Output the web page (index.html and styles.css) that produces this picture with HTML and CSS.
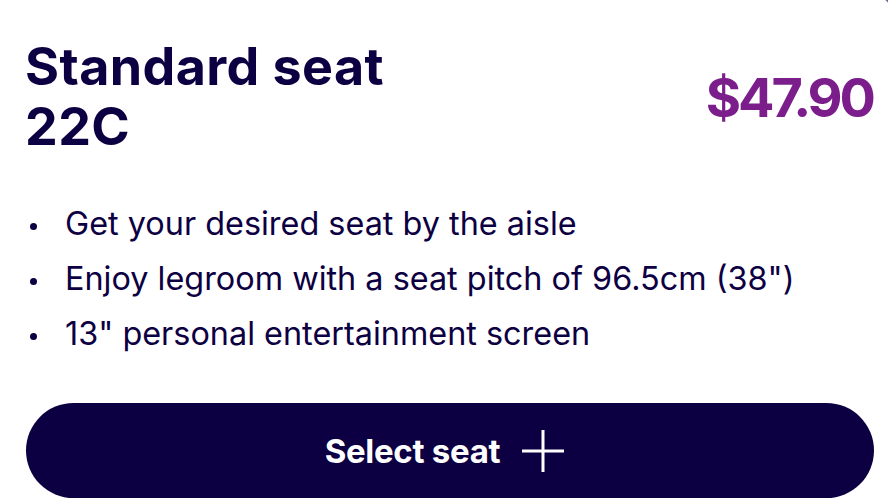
FILE: index.html
```html
<html>
  <head>
    <link rel="stylesheet" href="styles.css">
  </head>
  <body>
    <div class="seat-card">
      <span class="corner-dot"></span>
      <div class="seat-head">
        <h1 class="seat-title">Standard seat<br>22C</h1>
        <div class="seat-price">$47.90</div>
      </div>
      <ul class="seat-perks">
        <li>Get your desired seat by the aisle</li>
        <li>Enjoy legroom with a seat pitch of 96.5cm (38")</li>
        <li>13" personal entertainment screen</li>
      </ul>
      <button class="select-btn">
        <span>Select seat</span>
        <svg class="plus" viewBox="0 0 44 44" width="44" height="44">
          <path d="M22 1 V43 M1 22 H43" stroke="#fff" stroke-width="3" fill="none"/>
        </svg>
      </button>
    </div>
  </body>
</html>
```

FILE: styles.css
```css
body {
  margin: 0;
  background-color: white;
  font-family: Inter, "Liberation Sans", sans-serif;
  color: #0d0042;
}
.seat-card {
  position: relative;
  padding: 37px 15px 0 25px;
}
.corner-dot {
  position: absolute;
  top: -26px;
  right: -26px;
  width: 32px;
  height: 32px;
  border-radius: 50%;
  background-color: #6e6890;
}
.seat-head {
  display: flex;
  align-items: center;
  justify-content: space-between;
}
.seat-title {
  margin: 0;
  font-size: 52px;
  line-height: 60px;
  font-weight: 700;
  letter-spacing: 0.4px;
}
.seat-price {
  color: #7b1e8b;
  font-size: 54px;
  font-weight: 700;
  letter-spacing: -3px;
}
.seat-perks {
  list-style: none;
  margin: 39px 0 0 0;
  padding: 0 0 0 40px;
  font-size: 32.4px;
  line-height: 55px;
}
.seat-perks li {
  position: relative;
}
.seat-perks li::before {
  content: "";
  position: absolute;
  left: -35px;
  top: 27px;
  width: 7px;
  height: 7px;
  border-radius: 50%;
  background-color: #0d0042;
}
.select-btn {
  display: flex;
  align-items: center;
  justify-content: center;
  gap: 21px;
  width: 848px;
  height: 95px;
  margin: 42px 0 0 1px;
  padding: 0 10px 0 0;
  border: none;
  border-radius: 48px;
  background-color: #0d0042;
  color: white;
  font-family: Inter, "Liberation Sans", sans-serif;
  font-size: 33px;
  font-weight: 700;
  letter-spacing: -0.3px;
}
.plus {
  display: block;
}
```
